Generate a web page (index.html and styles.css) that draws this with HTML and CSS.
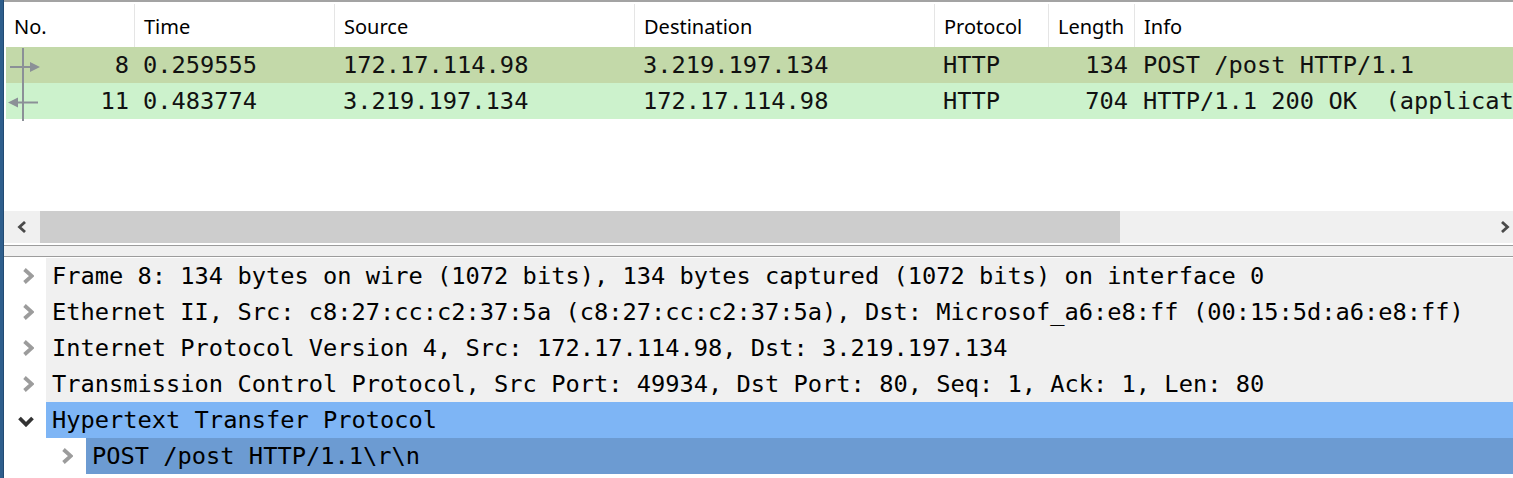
FILE: index.html
```html
<!DOCTYPE html>
<html>
<head>
<meta charset="utf-8">
<link rel="stylesheet" href="styles.css">
</head>
<body>
<div class="app">
  <div class="strip"></div>
  <div class="main">
    <div class="plist">
      <div class="phead">
        <div class="hc">No.</div>
        <div class="hc">Time</div>
        <div class="hc">Source</div>
        <div class="hc">Destination</div>
        <div class="hc">Protocol</div>
        <div class="hc">Length</div>
        <div class="hc last">Info</div>
      </div>
      <div class="pbody">
        <div class="prow sel">
          <div class="pc num">8</div>
          <div class="pc">0.259555</div>
          <div class="pc">172.17.114.98</div>
          <div class="pc">3.219.197.134</div>
          <div class="pc">HTTP</div>
          <div class="pc len">134</div>
          <div class="pc info">POST /post HTTP/1.1</div>
        </div>
        <div class="prow http">
          <div class="pc num">11</div>
          <div class="pc">0.483774</div>
          <div class="pc">3.219.197.134</div>
          <div class="pc">172.17.114.98</div>
          <div class="pc">HTTP</div>
          <div class="pc len">704</div>
          <div class="pc info">HTTP/1.1 200 OK  (application/json)</div>
        </div>
        <svg class="related" width="40" height="76" viewBox="0 0 40 76">
          <rect x="18" y="1" width="2" height="73" fill="#8b9097"/>
          <rect x="6" y="19" width="21" height="2" fill="#8b9097"/>
          <polygon points="26,15 36,20 26,25" fill="#8b9097"/>
          <rect x="14" y="54.5" width="20" height="2" fill="#8b9097"/>
          <polygon points="4,55.5 14,50.5 14,60.5" fill="#8b9097"/>
        </svg>
      </div>
    </div>
    <div class="hscroll">
      <div class="sbtn sleft">
        <svg width="10" height="12" viewBox="0 0 10 12"><path d="M8 1 L2.5 6 L8 11" fill="none" stroke="#4a4a4a" stroke-width="2.8"/></svg>
      </div>
      <div class="thumb"></div>
      <div class="track"></div>
      <div class="sbtn sright">
        <svg width="10" height="12" viewBox="0 0 10 12"><path d="M2 1 L7.5 6 L2 11" fill="none" stroke="#4a4a4a" stroke-width="2.8"/></svg>
      </div>
    </div>
    <div class="splitter"></div>
    <div class="tree">
      <div class="trow">
        <div class="twist"><svg class="chev" width="12" height="16" viewBox="0 0 12 16"><path d="M2.5 1.5 L9.8 8 L2.5 14.5" fill="none" stroke="#9c9c9c" stroke-width="3.8"/></svg></div>
        <div class="tlabel">Frame 8: 134 bytes on wire (1072 bits), 134 bytes captured (1072 bits) on interface 0</div>
      </div>
      <div class="trow">
        <div class="twist"><svg class="chev" width="12" height="16" viewBox="0 0 12 16"><path d="M2.5 1.5 L9.8 8 L2.5 14.5" fill="none" stroke="#9c9c9c" stroke-width="3.8"/></svg></div>
        <div class="tlabel">Ethernet II, Src: c8:27:cc:c2:37:5a (c8:27:cc:c2:37:5a), Dst: Microsof_a6:e8:ff (00:15:5d:a6:e8:ff)</div>
      </div>
      <div class="trow">
        <div class="twist"><svg class="chev" width="12" height="16" viewBox="0 0 12 16"><path d="M2.5 1.5 L9.8 8 L2.5 14.5" fill="none" stroke="#9c9c9c" stroke-width="3.8"/></svg></div>
        <div class="tlabel">Internet Protocol Version 4, Src: 172.17.114.98, Dst: 3.219.197.134</div>
      </div>
      <div class="trow">
        <div class="twist"><svg class="chev" width="12" height="16" viewBox="0 0 12 16"><path d="M2.5 1.5 L9.8 8 L2.5 14.5" fill="none" stroke="#9c9c9c" stroke-width="3.8"/></svg></div>
        <div class="tlabel">Transmission Control Protocol, Src Port: 49934, Dst Port: 80, Seq: 1, Ack: 1, Len: 80</div>
      </div>
      <div class="trow hl">
        <div class="twist open"><svg class="chev" width="16" height="11" viewBox="0 0 16 11"><path d="M1.5 2 L8 8.5 L14.5 2" fill="none" stroke="#333" stroke-width="3.8"/></svg></div>
        <div class="tlabel">Hypertext Transfer Protocol</div>
      </div>
      <div class="trow sel lvl1">
        <div class="twist"><svg class="chev" width="12" height="16" viewBox="0 0 12 16"><path d="M2.5 1.5 L9.8 8 L2.5 14.5" fill="none" stroke="#9c9c9c" stroke-width="3.8"/></svg></div>
        <div class="tlabel">POST /post HTTP/1.1\r\n</div>
      </div>
    </div>
  </div>
</div>
</body>
</html>
```

FILE: styles.css
```css
html, body {
  margin: 0;
  padding: 0;
  background: #ffffff;
  overflow: hidden;
}

.app {
  display: flex;
  height: 478px;
  width: 1513px;
}

.strip {
  width: 3px;
  background: #2e5e8c;
  border-right: 1px solid #224b73;
  flex: none;
}

.main {
  flex: 1;
  min-width: 0;
  display: flex;
  flex-direction: column;
  border-top: 2px solid #a3a3a3;
  overflow: hidden;
}

/* packet list */
.plist {
  height: 209px;
  display: flex;
  flex-direction: column;
  flex: none;
}

.phead {
  display: grid;
  grid-template-columns: 131px 200px 300px 300px 114px 86px 1fr;
  padding-top: 2px;
  height: 43px;
  flex: none;
}

.hc {
  font-family: "Noto Sans", "Open Sans", sans-serif;
  font-size: 20px;
  color: #000;
  line-height: 43px;
  padding-top: 1px;
  padding-left: 9px;
  border-right: 1px solid #e5e5e5;
  white-space: nowrap;
  overflow: hidden;
  box-sizing: border-box;
}

.hc:first-child {
  padding-left: 10px;
}

.hc.last {
  border-right: none;
}

.pbody {
  position: relative;
  flex: 1;
}

.prow {
  display: grid;
  grid-template-columns: 129px 200px 300px 300px 114px 86px 1fr;
  margin-left: 2px;
  height: 36px;
  font-family: "DejaVu Sans Mono", monospace;
  font-size: 23.7px;
  line-height: 36px;
  color: #111;
}

.prow.sel {
  background: #c3d9a9;
}

.prow.http {
  background: #ccf2cc;
}

.pc {
  padding-left: 8px;
  white-space: pre;
  overflow: hidden;
}

.pc.num {
  text-align: right;
  padding-left: 0;
  padding-right: 6px;
}

.pc.len {
  text-align: right;
  padding-left: 0;
  padding-right: 7px;
}

.related {
  position: absolute;
  left: 0;
  top: 0;
}

/* horizontal scrollbar */
.hscroll {
  display: flex;
  height: 32px;
  background: #f0f0f0;
  flex: none;
}

.sbtn {
  width: 36px;
  display: flex;
  align-items: center;
  justify-content: center;
  flex: none;
  box-sizing: border-box;
}

.sbtn.sright {
  width: 27px;
  justify-content: flex-start;
  padding-left: 14px;
}

.thumb {
  width: 1080px;
  background: #cdcdcd;
  flex: none;
}

.track {
  flex: 1;
}

/* splitter */
.splitter {
  height: 10px;
  margin-top: 2px;
  background: #f0f0f0;
  border-top: 1px solid #9c9c9c;
  border-bottom: 1px solid #9c9c9c;
  flex: none;
}

/* detail tree */
.tree {
  padding-top: 1px;
  flex: 1;
}

.trow {
  display: flex;
  height: 36px;
  font-family: "DejaVu Sans Mono", monospace;
  font-size: 23.7px;
  line-height: 36px;
  color: #000;
}

.twist {
  width: 42px;
  flex: none;
  display: flex;
  align-items: center;
  padding-left: 18px;
  box-sizing: border-box;
}

.twist.open {
  padding-left: 14px;
  padding-top: 3px;
}

.trow.lvl1 .twist {
  width: 82px;
  padding-left: 57px;
}

.chev {
  display: block;
  flex: none;
}

.tlabel {
  flex: 1;
  background: #f0f0f0;
  padding-left: 6px;
  white-space: pre;
  overflow: hidden;
}

.trow.hl .tlabel {
  background: #7eb5f5;
}

.trow.sel .tlabel {
  background: #6c9bd2;
}
```
